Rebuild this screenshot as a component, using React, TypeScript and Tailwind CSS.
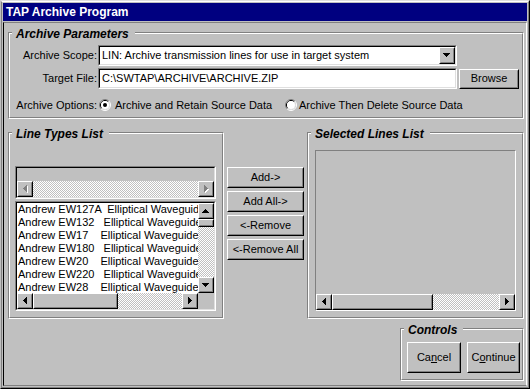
import React from "react";

type BoxProps = { className?: string; inner?: string; children?: React.ReactNode };

const DITHER =
  "bg-[image:repeating-conic-gradient(#ffffff_0%_25%,#c0c0c0_0%_50%)] bg-[length:2px_2px]";

// 3D raised frame: buttons, scroll arrows, thumbs
function Raised({ className = "", inner = "", children }: BoxProps) {
  return (
    <div
      className={
        "border border-t-white border-l-white border-r-black border-b-black bg-[#c0c0c0] " + className
      }
    >
      <div
        className={
          "flex h-full w-full items-center justify-center border border-t-[#c0c0c0] border-l-[#c0c0c0] border-r-[#808080] border-b-[#808080] " +
          inner
        }
      >
        {children}
      </div>
    </div>
  );
}

// 3D sunken frame: edit fields, list boxes
function Sunken({ className = "", inner = "", children }: BoxProps) {
  return (
    <div
      className={
        "border border-t-[#808080] border-l-[#808080] border-r-white border-b-white " + className
      }
    >
      <div
        className={
          "h-full w-full border border-t-black border-l-black border-r-[#dfdfdf] border-b-[#dfdfdf] " + inner
        }
      >
        {children}
      </div>
    </div>
  );
}

function GroupBox({ label, className = "", inner = "", children }: BoxProps & { label: string }) {
  return (
    <div
      className={
        "relative border border-t-[#808080] border-l-[#808080] border-r-white border-b-white " + className
      }
    >
      <div
        className={
          "h-full w-full border border-t-white border-l-white border-r-[#808080] border-b-[#808080] " + inner
        }
      >
        {children}
      </div>
      <span className="absolute left-[3px] top-[-6px] bg-[#c0c0c0] pl-[4px] pr-[6px] text-[12px] font-bold italic leading-[14px]">
        {label}
      </span>
    </div>
  );
}

const ARROWS: Record<string, { w: number; h: number; r: number[][] }> = {
  down: { w: 7, h: 4, r: [[0, 0, 7, 1], [1, 1, 5, 1], [2, 2, 3, 1], [3, 3, 1, 1]] },
  up: { w: 7, h: 4, r: [[3, 0, 1, 1], [2, 1, 3, 1], [1, 2, 5, 1], [0, 3, 7, 1]] },
  left: { w: 4, h: 7, r: [[0, 3, 1, 1], [1, 2, 1, 3], [2, 1, 1, 5], [3, 0, 1, 7]] },
  right: { w: 4, h: 7, r: [[0, 0, 1, 7], [1, 1, 1, 5], [2, 2, 1, 3], [3, 3, 1, 1]] },
};

function Arrow({ dir, disabled }: { dir: string; disabled?: boolean }) {
  const a = ARROWS[dir];
  return (
    <svg width={a.w + 1} height={a.h + 1} shapeRendering="crispEdges">
      {disabled &&
        a.r.map(([x, y, w, h], i) => (
          <rect key={"s" + i} x={x + 1} y={y + 1} width={w} height={h} fill="#ffffff" />
        ))}
      {a.r.map(([x, y, w, h], i) => (
        <rect key={i} x={x} y={y} width={w} height={h} fill={disabled ? "#808080" : "#000000"} />
      ))}
    </svg>
  );
}

function Radio({ checked }: { checked?: boolean }) {
  return (
    <svg width="12" height="12" className="shrink-0">
      <path d="M2.11 9.89 A5.5 5.5 0 0 1 9.89 2.11" stroke="#808080" fill="none" />
      <path d="M9.89 2.11 A5.5 5.5 0 0 1 2.11 9.89" stroke="#ffffff" fill="none" />
      <path d="M2.82 9.18 A4.5 4.5 0 0 1 9.18 2.82" stroke="#000000" fill="none" />
      <path d="M9.18 2.82 A4.5 4.5 0 0 1 2.82 9.18" stroke="#dfdfdf" fill="none" />
      <circle cx="6" cy="6" r="4" fill="#ffffff" />
      {checked && <circle cx="6" cy="6" r="2" fill="#000000" />}
    </svg>
  );
}

function HScroll({ thumb, disabled }: { thumb?: string; disabled?: boolean }) {
  return (
    <div className="flex h-[16px] shrink-0">
      <Raised className="h-[16px] w-[16px] shrink-0">
        <Arrow dir="left" disabled={disabled} />
      </Raised>
      {thumb && <Raised className={"h-[16px] shrink-0 " + thumb} />}
      <div className={"flex-1 " + DITHER} />
      <Raised className="h-[16px] w-[16px] shrink-0">
        <Arrow dir="right" disabled={disabled} />
      </Raised>
    </div>
  );
}

const lineTypes = [
  "Andrew EW127A  Elliptical Waveguide, 127 GHz",
  "Andrew EW132   Elliptical Waveguide, 13 GHz",
  "Andrew EW17    Elliptical Waveguide, 1.7 GHz",
  "Andrew EW180   Elliptical Waveguide, 18 GHz",
  "Andrew EW20    Elliptical Waveguide, 2 GHz",
  "Andrew EW220   Elliptical Waveguide, 22 GHz",
  "Andrew EW28    Elliptical Waveguide, 2.8 GHz",
];

const moveButtons = ["Add->", "Add All->", "<-Remove", "<-Remove All"];

export default function App() {
  return (
    <div className="h-[389px] w-[530px] overflow-hidden border border-t-[#dfdfdf] border-l-[#c0c0c0] border-r-black border-b-black bg-[#c0c0c0] font-['Liberation_Sans',Arial,sans-serif] text-[11px] leading-[13px] text-black">
      <div className="flex h-full flex-col border border-t-white border-l-[#808080] border-r-[#808080] border-b-[#808080] p-[1px]">
        <div className="flex h-[18px] shrink-0 items-center bg-[#000080] pl-[3px] text-[12px] font-bold text-white">
          TAP Archive Program
        </div>

        <div className="mt-[1px] flex flex-1 flex-col border border-t-[#808080] border-l-black border-r-white border-b-[#808080] pl-[4px] pr-[2px] pt-[9px]">
          {/* archive parameters */}
          <GroupBox label="Archive Parameters" className="h-[87px] w-[516px]" inner="flex flex-col pt-[11px]">
            <div className="flex h-[21px] items-center">
              <span className="w-[87px] text-right">Archive Scope:</span>
              <Sunken className="ml-[1px] h-[21px] w-[359px]" inner="flex items-center bg-white">
                <span className="flex-1 pl-[2px]">LIN: Archive transmission lines for use in target system</span>
                <Raised className="h-[17px] w-[16px]">
                  <Arrow dir="down" />
                </Raised>
              </Sunken>
            </div>
            <div className="mt-[2px] flex h-[21px] items-center">
              <span className="w-[87px] text-right">Target File:</span>
              <Sunken className="ml-[1px] h-[21px] w-[359px]" inner="flex items-center bg-white pl-[2px]">
                {"C:\\SWTAP\\ARCHIVE\\ARCHIVE.ZIP"}
              </Sunken>
              <Raised className="ml-[2px] h-[20px] w-[60px]">Browse</Raised>
            </div>
            <div className="mt-[6px] flex h-[20px] items-center">
              <span className="w-[87px] text-right">Archive Options:</span>
              <div className="ml-[2px] flex w-[186px] items-center gap-[4px]">
                <Radio checked />
                <span>Archive and Retain Source Data</span>
              </div>
              <div className="flex items-center gap-[2px]">
                <Radio />
                <span>Archive Then Delete Source Data</span>
              </div>
            </div>
          </GroupBox>

          <div className="mt-[13px] flex">
            {/* line types */}
            <GroupBox label="Line Types List" className="h-[187px] w-[216px]" inner="flex flex-col pl-[5px] pt-[32px]">
              <Sunken className="h-[33px] w-[201px]" inner="flex flex-col justify-end bg-[#c0c0c0]">
                <HScroll disabled />
              </Sunken>
              <Sunken className="mt-[2px] h-[110px] w-[201px]" inner="flex bg-white">
                <div className="flex min-w-0 flex-1 flex-col">
                  <div className="flex-1 overflow-hidden pl-[1px]">
                    {lineTypes.map((row) => (
                      <div key={row} className="h-[13px] whitespace-pre leading-[13px]">
                        {row}
                      </div>
                    ))}
                  </div>
                  <HScroll thumb="w-[85px]" />
                </div>
                <div className="flex w-[16px] shrink-0 flex-col">
                  <Raised className="h-[16px] w-[16px] shrink-0">
                    <Arrow dir="up" />
                  </Raised>
                  <Raised className="h-[8px] w-[16px] shrink-0" />
                  <div className={"flex-1 " + DITHER} />
                  <Raised className="h-[16px] w-[16px] shrink-0">
                    <Arrow dir="down" />
                  </Raised>
                  <div className="h-[16px] shrink-0 bg-[#c0c0c0]" />
                </div>
              </Sunken>
            </GroupBox>

            {/* move buttons */}
            <div className="flex w-[83px] flex-col gap-[3px] pl-[3px] pt-[35px]">
              {moveButtons.map((b) => (
                <Raised key={b} className="h-[21px] w-[77px]">
                  <span className="whitespace-nowrap">{b}</span>
                </Raised>
              ))}
            </div>

            {/* selected lines */}
            <GroupBox label="Selected Lines List" className="h-[187px] w-[217px]" inner="pl-[6px] pt-[16px]">
              <div className="flex h-[161px] w-[201px] flex-col justify-end border border-t-[#808080] border-l-[#808080] border-r-white border-b-white">
                <HScroll thumb="w-[101px]" />
              </div>
            </GroupBox>
          </div>

          {/* controls */}
          <div className="mt-[9px] flex justify-end">
            <GroupBox label="Controls" className="h-[53px] w-[124px]" inner="flex gap-[6px] pl-[5px] pt-[12px]">
              <Raised className="h-[31px] w-[54px]">
                <span>
                  Ca<u>n</u>cel
                </span>
              </Raised>
              <Raised className="h-[31px] w-[53px]">
                <span>
                  C<u>o</u>ntinue
                </span>
              </Raised>
            </GroupBox>
          </div>
        </div>
      </div>
    </div>
  );
}
